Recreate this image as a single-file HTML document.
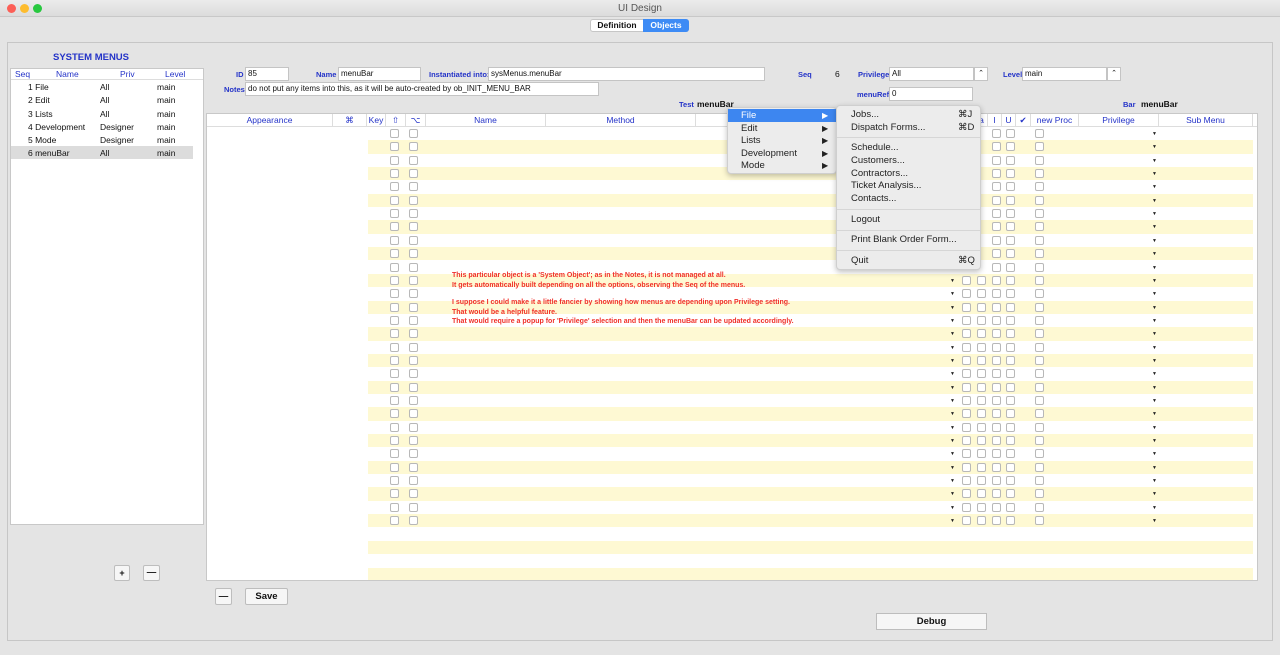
<!DOCTYPE html>
<html><head><meta charset="utf-8">
<style>
*{box-sizing:border-box;margin:0;padding:0}
body{width:1280px;height:655px;overflow:hidden;background:#e4e4e4;font-family:"Liberation Sans",sans-serif;font-size:9px;color:#111;position:relative}
.a{position:absolute}
.lbl{position:absolute;color:#2433c8;font-weight:bold;font-size:7.5px}
.fld{position:absolute;background:#fff;border:1px solid #c4c4c4;font-size:8px;padding:0 2px;line-height:12px}
.hd{position:absolute;top:0;height:13px;line-height:13px;color:#2433c8;font-size:8.5px;text-align:center;border-right:1px solid #ddd}
.cb{position:absolute;width:9px;height:9px;border:1px solid #b8b8b8;border-radius:2px;background:#fff}
.dd{position:absolute;font-size:5px;color:#222}
.mi{position:absolute;left:0;right:0;height:13px;line-height:13px;font-size:9.5px;color:#222}
.sep{position:absolute;left:0;right:0;height:1px;background:#d6d6d6}
.btn{position:absolute;background:#f6f6f6;border:1px solid #bdbdbd;border-radius:2px;text-align:center;font-weight:bold;font-size:9.5px}
.red{position:absolute;left:452px;color:#f0302a;font-size:7px;font-weight:bold;line-height:9.5px}
</style></head><body>
<div class="a" style="left:0;top:0;width:1280px;height:17px;background:linear-gradient(#ececec,#dcdcdc);border-bottom:1px solid #c8c8c8"></div>
<div class="a" style="left:7px;top:4px;width:9px;height:9px;border-radius:50%;background:#fc5f57"></div>
<div class="a" style="left:20px;top:4px;width:9px;height:9px;border-radius:50%;background:#fdbc2e"></div>
<div class="a" style="left:33px;top:4px;width:9px;height:9px;border-radius:50%;background:#28c840"></div>
<div class="a" style="left:0;width:1280px;top:3px;text-align:center;color:#555;font-size:10px">UI Design</div>
<div class="a" style="left:1276px;top:17px;width:4px;height:638px;background:#d0d0d0"></div>
<div class="a" style="left:0;top:17px;width:1280px;height:638px;background:#e4e4e4"></div>
<div class="a" style="left:590px;top:19px;width:99px;height:13px;border:1px solid #c6c6c6;border-radius:3px;background:#fff"></div>
<div class="a" style="left:591px;top:20px;width:52px;height:11px;line-height:11px;text-align:center;font-weight:bold;font-size:8.5px">Definition</div>
<div class="a" style="left:643px;top:19px;width:46px;height:13px;line-height:13px;text-align:center;font-weight:bold;font-size:8.5px;color:#fff;background:#3d8bf5;border-radius:0 3px 3px 0">Objects</div>
<div class="a" style="left:7px;top:42px;width:1266px;height:599px;border:1px solid #c6c6c6"></div>
<div class="a" style="left:53px;top:52px;color:#2433c8;font-weight:bold;font-size:9.5px">SYSTEM MENUS</div>
<div class="a" style="left:10px;top:68px;width:194px;height:457px;background:#fff;border:1px solid #c8c8c8"></div>
<div class="a" style="left:11px;top:68px;width:192px;height:12px;border-bottom:1px solid #ddd"></div>
<div class="a" style="left:15px;top:69px;color:#2433c8;font-size:8.5px">Seq</div>
<div class="a" style="left:56px;top:69px;color:#2433c8;font-size:8.5px">Name</div>
<div class="a" style="left:120px;top:69px;color:#2433c8;font-size:8.5px">Priv</div>
<div class="a" style="left:165px;top:69px;color:#2433c8;font-size:8.5px">Level</div>
<div class="a" style="left:11px;top:146px;width:182px;height:13px;background:#dcdcdc"></div>
<div class="a" style="left:28px;top:81px;line-height:13.3px;font-size:8.5px">1 File<br>2 Edit<br>3 Lists<br>4 Development<br>5 Mode<br>6 menuBar</div>
<div class="a" style="left:100px;top:81px;line-height:13.3px;font-size:8.5px">All<br>All<br>All<br>Designer<br>Designer<br>All</div>
<div class="a" style="left:157px;top:81px;line-height:13.3px;font-size:8.5px">main<br>main<br>main<br>main<br>main<br>main</div>
<div class="btn" style="left:114px;top:565px;width:16px;height:16px;line-height:15px;font-size:9px">+</div>
<div class="btn" style="left:143px;top:565px;width:17px;height:16px;line-height:14px">—</div>
<div class="lbl" style="left:236px;top:70px">ID</div><div class="fld" style="left:245px;top:67px;width:44px;height:14px">85</div>
<div class="lbl" style="left:316px;top:70px">Name</div><div class="fld" style="left:338px;top:67px;width:83px;height:14px">menuBar</div>
<div class="lbl" style="left:429px;top:70px">Instantiated into:</div><div class="fld" style="left:488px;top:67px;width:277px;height:14px">sysMenus.menuBar</div>
<div class="lbl" style="left:224px;top:85px">Notes</div><div class="fld" style="left:245px;top:82px;width:354px;height:14px">do not put any items into this, as it will be auto-created by ob_INIT_MENU_BAR</div>
<div class="lbl" style="left:798px;top:70px">Seq</div><div class="a" style="left:835px;top:69px;font-size:8.5px">6</div>
<div class="lbl" style="left:858px;top:70px">Privilege</div><div class="fld" style="left:889px;top:67px;width:85px;height:14px">All</div>
<div class="fld" style="left:974px;top:67px;width:14px;height:14px;font-size:7px;text-align:center;padding:0">⌃</div>
<div class="lbl" style="left:1003px;top:70px">Level</div><div class="fld" style="left:1022px;top:67px;width:85px;height:14px">main</div>
<div class="fld" style="left:1107px;top:67px;width:14px;height:14px;font-size:7px;text-align:center;padding:0">⌃</div>
<div class="lbl" style="left:857px;top:90px">menuRef</div><div class="fld" style="left:889px;top:87px;width:84px;height:14px">0</div>
<div class="lbl" style="left:679px;top:100px">Test</div><div class="a" style="left:697px;top:99px;font-weight:bold;font-size:8.5px">menuBar</div>
<div class="lbl" style="left:1123px;top:100px">Bar</div><div class="a" style="left:1141px;top:99px;font-weight:bold;font-size:8.5px">menuBar</div>
<div class="a" id="tbl" style="left:206px;top:113px;width:1052px;height:468px;background:#fff;border:1px solid #c8c8c8;overflow:hidden">
<div class="a" style="left:0;top:0;width:1052px;height:13px;border-bottom:1px solid #ddd;background:#fff"></div>
<div class="hd" style="left:0;width:126px">Appearance</div>
<div class="hd" style="left:126px;width:34px">⌘</div>
<div class="hd" style="left:160px;width:19px">Key</div>
<div class="hd" style="left:179px;width:20px">⇧</div>
<div class="hd" style="left:199px;width:20px">⌥</div>
<div class="hd" style="left:219px;width:120px">Name</div>
<div class="hd" style="left:339px;width:150px">Method</div>
<div class="hd" style="left:489px;width:280px"></div>
<div class="hd" style="left:769px;width:12px">a</div>
<div class="hd" style="left:781px;width:14px">I</div>
<div class="hd" style="left:795px;width:14px">U</div>
<div class="hd" style="left:809px;width:15px">✔</div>
<div class="hd" style="left:824px;width:48px">new Proc</div>
<div class="hd" style="left:872px;width:80px">Privilege</div>
<div class="hd" style="left:952px;width:94px">Sub Menu</div>
</div>
<div class="red" style="top:271px">This particular object is a 'System Object'; as in the Notes, it is not managed at all.<br>It gets automatically built depending on all the options, observing the Seq of the menus.</div>
<div class="red" style="top:298px">I suppose I could make it a little fancier by showing how menus are depending upon Privilege setting.<br>That would be a helpful feature.<br>That would require a popup for 'Privilege' selection and then the menuBar can be updated accordingly.</div>
<div class="a" style="left:727px;top:107px;width:110px;height:67px;background:#ececec;border:1px solid #cfcfcf;border-radius:4px;box-shadow:0 2px 6px rgba(0,0,0,.25)">
<div class="mi" style="top:1px;background:#3d86f0;color:#fff;padding-left:13px">File<span style="position:absolute;left:94px;font-size:8px">▶</span></div>
<div class="mi" style="top:14px;padding-left:13px">Edit<span style="position:absolute;left:94px;font-size:8px">▶</span></div>
<div class="mi" style="top:26px;padding-left:13px">Lists<span style="position:absolute;left:94px;font-size:8px">▶</span></div>
<div class="mi" style="top:39px;padding-left:13px">Development<span style="position:absolute;left:94px;font-size:8px">▶</span></div>
<div class="mi" style="top:51px;padding-left:13px">Mode<span style="position:absolute;left:94px;font-size:8px">▶</span></div>
</div>
<div class="a" style="left:836px;top:105px;width:145px;height:165px;background:#ececec;border:1px solid #cfcfcf;border-radius:4px;box-shadow:0 2px 6px rgba(0,0,0,.25)">
<div class="mi" style="top:2px;padding-left:14px">Jobs...<span style="position:absolute;left:121px">⌘J</span></div>
<div class="mi" style="top:15px;padding-left:14px">Dispatch Forms...<span style="position:absolute;left:121px">⌘D</span></div>
<div class="sep" style="top:31px"></div>
<div class="mi" style="top:35px;padding-left:14px">Schedule...</div>
<div class="mi" style="top:48px;padding-left:14px">Customers...</div>
<div class="mi" style="top:61px;padding-left:14px">Contractors...</div>
<div class="mi" style="top:73px;padding-left:14px">Ticket Analysis...</div>
<div class="mi" style="top:86px;padding-left:14px">Contacts...</div>
<div class="sep" style="top:103px"></div>
<div class="mi" style="top:107px;padding-left:14px">Logout</div>
<div class="sep" style="top:124px"></div>
<div class="mi" style="top:127px;padding-left:14px">Print Blank Order Form...</div>
<div class="sep" style="top:144px"></div>
<div class="mi" style="top:148px;padding-left:14px">Quit<span style="position:absolute;left:121px">⌘Q</span></div>
</div>
<div class="btn" style="left:215px;top:588px;width:17px;height:17px;line-height:15px">—</div>
<div class="btn" style="left:245px;top:588px;width:43px;height:17px;line-height:16px">Save</div>
<div class="btn" style="left:876px;top:613px;width:111px;height:17px;line-height:16px;border-radius:0">Debug</div>
<script>
var t=document.getElementById('tbl'),h='';
for(var i=0;i<34;i++){var y=13+i*13.35;
 if(i%2==1)h+='<div class="a" style="left:161px;top:'+y+'px;width:885px;height:13.35px;background:#fef9d3"></div>';
 if(i<30){h+='<div class="cb" style="left:183px;top:'+(y+2)+'px"></div><div class="cb" style="left:202px;top:'+(y+2)+'px"></div>';
  var cy=y+2;
  if(i>=11){h+='<div class="dd" style="left:743px;top:'+(y+4)+'px">▼</div>';
   [755,770,785,799].forEach(function(x){h+='<div class="cb" style="left:'+x+'px;top:'+cy+'px"></div>'});}
  else{ [785,799].forEach(function(x){h+='<div class="cb" style="left:'+x+'px;top:'+cy+'px"></div>'});}
  h+='<div class="cb" style="left:828px;top:'+cy+'px"></div><div class="dd" style="left:945px;top:'+(y+4)+'px">▼</div>';}
}
t.insertAdjacentHTML('beforeend',h);
</script>
</body></html>
